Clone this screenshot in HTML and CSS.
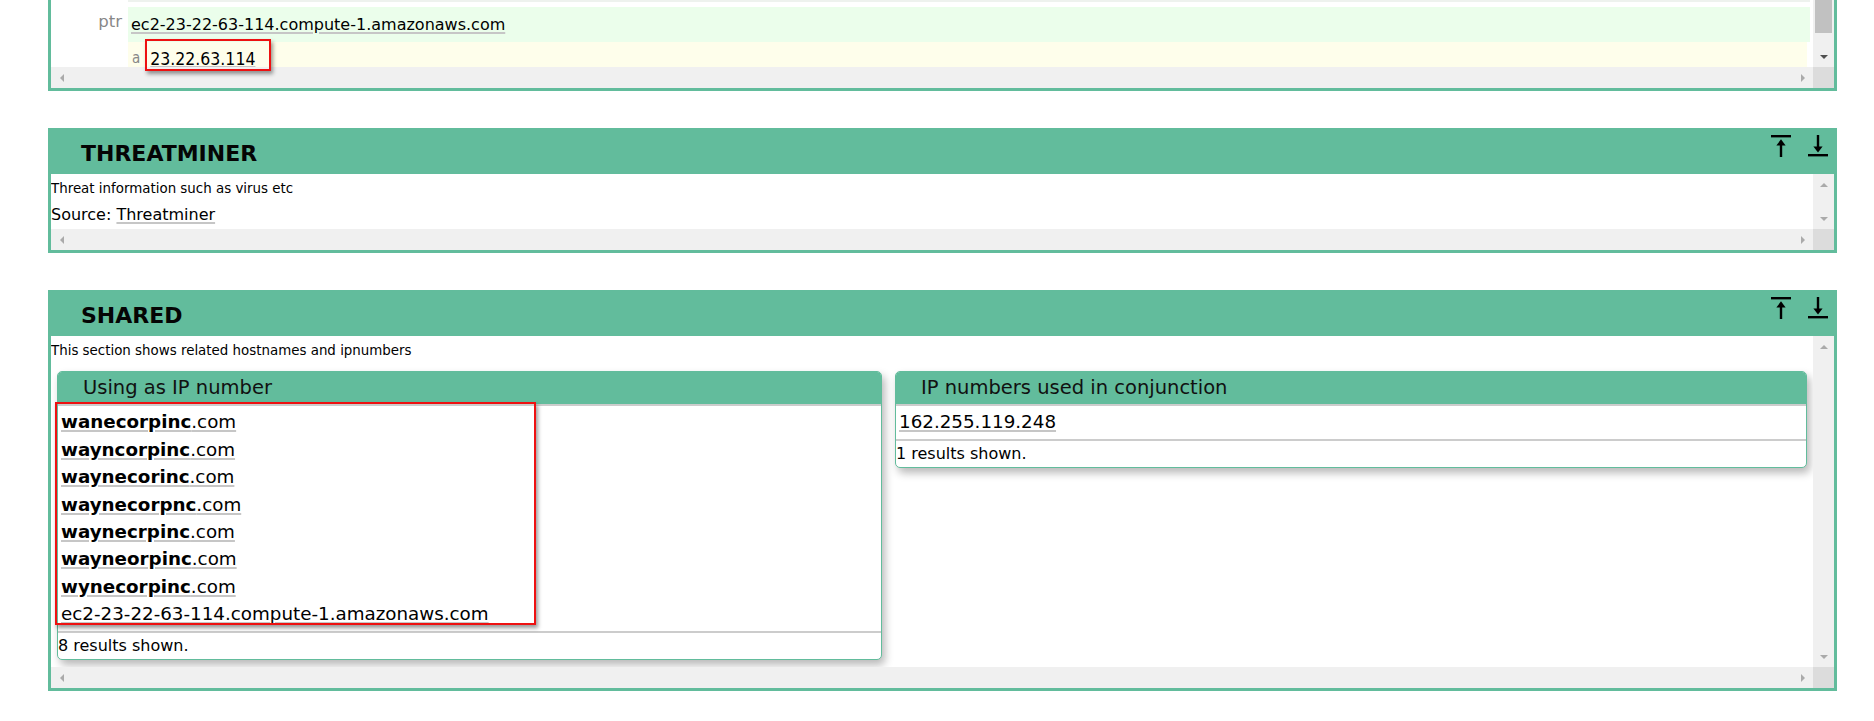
FILE: index.html
```html
<!DOCTYPE html>
<html>
<head>
<meta charset="utf-8">
<title>Sections</title>
<link rel="stylesheet" href="styles.css">
</head>
<body>
<div class="page">

  <section class="panel cut">
    <div class="pbody">
      <div class="pcontent dns">
        <div class="strip"></div>
        <div class="kv ptr">
          <span class="k">ptr</span>
          <span class="v"><a class="lnk">ec2-23-22-63-114.compute-1.amazonaws.com</a></span>
        </div>
        <div class="kv arec">
          <span class="k0"></span>
          <span class="v"><span class="ka">a</span><a class="lnk ip">23.22.63.114</a></span>
        </div>
      </div>
      <div class="vscroll active"><div class="thumb"></div><div class="btn"><i class="tri down dark"></i></div></div>
      <div class="hscroll"><div class="btn"><i class="tri left"></i></div><div class="btn"><i class="tri right"></i></div></div>
      <div class="corner"></div>
    </div>
  </section>

  <section class="panel">
    <header class="phead">
      <h2>THREATMINER</h2>
      <div class="tools">
        <svg class="ic" viewBox="0 0 20 22" width="20" height="22"><rect x="0" y="0" width="20" height="2.4"/><rect x="8.8" y="8" width="2.4" height="14"/><path d="M10 4.3 L14.6 10.4 H5.4 Z"/></svg>
        <svg class="ic" viewBox="0 0 20 22" width="20" height="22"><rect x="8.8" y="0" width="2.4" height="13"/><path d="M10 17.6 L14.6 11.6 H5.4 Z"/><rect x="0" y="19" width="20" height="2.4"/></svg>
      </div>
    </header>
    <div class="pbody">
      <div class="pcontent tm">
        <p class="desc">Threat information such as virus etc</p>
        <p class="source">Source: <a class="lnk">Threatminer</a></p>
      </div>
      <div class="vscroll"><div class="btn"><i class="tri up"></i></div><div class="btn"><i class="tri down"></i></div></div>
      <div class="hscroll"><div class="btn"><i class="tri left"></i></div><div class="btn"><i class="tri right"></i></div></div>
      <div class="corner"></div>
    </div>
  </section>

  <section class="panel">
    <header class="phead">
      <h2>SHARED</h2>
      <div class="tools">
        <svg class="ic" viewBox="0 0 20 22" width="20" height="22"><rect x="0" y="0" width="20" height="2.4"/><rect x="8.8" y="8" width="2.4" height="14"/><path d="M10 4.3 L14.6 10.4 H5.4 Z"/></svg>
        <svg class="ic" viewBox="0 0 20 22" width="20" height="22"><rect x="8.8" y="0" width="2.4" height="13"/><path d="M10 17.6 L14.6 11.6 H5.4 Z"/><rect x="0" y="19" width="20" height="2.4"/></svg>
      </div>
    </header>
    <div class="pbody">
      <div class="pcontent shared">
        <p class="desc">This section shows related hostnames and ipnumbers</p>
        <div class="boxes">
          <div class="box">
            <div class="box-head">Using as IP number</div>
            <div class="box-list">
              <div class="row"><a class="lnk"><b>wanecorpinc</b>.com</a></div>
              <div class="row"><a class="lnk"><b>wayncorpinc</b>.com</a></div>
              <div class="row"><a class="lnk"><b>waynecorinc</b>.com</a></div>
              <div class="row"><a class="lnk"><b>waynecorpnc</b>.com</a></div>
              <div class="row"><a class="lnk"><b>waynecrpinc</b>.com</a></div>
              <div class="row"><a class="lnk"><b>wayneorpinc</b>.com</a></div>
              <div class="row"><a class="lnk"><b>wynecorpinc</b>.com</a></div>
              <div class="row"><a class="lnk">ec2-23-22-63-114.compute-1.amazonaws.com</a></div>
            </div>
            <div class="box-foot">8 results shown.</div>
          </div>
          <div class="box">
            <div class="box-head">IP numbers used in conjunction</div>
            <div class="box-list">
              <div class="row"><a class="lnk">162.255.119.248</a></div>
            </div>
            <div class="box-foot">1 results shown.</div>
          </div>
        </div>
      </div>
      <div class="vscroll"><div class="btn"><i class="tri up"></i></div><div class="btn"><i class="tri down"></i></div></div>
      <div class="hscroll"><div class="btn"><i class="tri left"></i></div><div class="btn"><i class="tri right"></i></div></div>
      <div class="corner"></div>
    </div>
  </section>

  <div class="annot annot-a"></div>
  <div class="annot annot-list"></div>
</div>
</body>
</html>
```

FILE: styles.css
```css
* { box-sizing: border-box; }

html, body {
  margin: 0;
  padding: 0;
  overflow: hidden;
  background: #ffffff;
}

body {
  font-family: "DejaVu Sans", Verdana, sans-serif;
  color: #000;
}

.page {
  position: relative;
  width: 1837px;
  padding-left: 48px;
}

.panel {
  border: 3px solid #62bc9c;
  background: #fff;
  margin-bottom: 37px;
}

.panel:last-of-type { margin-bottom: 0; }

.panel.cut { border-top: 0; }

/* ---------- header ---------- */
.phead {
  height: 43px;
  background: #62bc9c;
  display: flex;
  justify-content: space-between;
  align-items: flex-start;
  padding: 0 6px 0 30px;
}

.phead h2 {
  margin: 10px 0 0;
  font-size: 22px;
  line-height: 26px;
  font-weight: bold;
  color: #050505;
}

.tools {
  display: flex;
  gap: 17px;
  margin-top: 4px;
}

.ic { display: block; fill: #000; }

/* ---------- body with fake scrollbars ---------- */
.pbody {
  display: grid;
  grid-template-columns: 1fr 21px;
  grid-template-rows: auto 21px;
}

.pcontent { overflow: hidden; }

.vscroll {
  background: #f0f0f0;
  display: flex;
  flex-direction: column;
  justify-content: space-between;
  align-items: center;
}

.hscroll {
  background: #f0f0f0;
  display: flex;
  justify-content: space-between;
}

.corner { background: #dcdcdc; }

.btn {
  width: 21px;
  height: 21px;
  display: flex;
  align-items: center;
  justify-content: center;
}

.thumb {
  width: 17px;
  height: 33px;
  background: #c1c1c1;
}

.tri { display: block; width: 0; height: 0; }
.tri.up { border-left: 4px solid transparent; border-right: 4px solid transparent; border-bottom: 4px solid #aaaaaa; }
.tri.down { border-left: 4px solid transparent; border-right: 4px solid transparent; border-top: 4px solid #aaaaaa; }
.tri.left { border-top: 4px solid transparent; border-bottom: 4px solid transparent; border-right: 4px solid #aaaaaa; }
.tri.right { border-top: 4px solid transparent; border-bottom: 4px solid transparent; border-left: 4px solid #aaaaaa; }
.tri.down.dark { border-top-color: #505050; }

/* ---------- links ---------- */
.lnk {
  color: #000;
  text-decoration: underline;
  text-decoration-color: #c6c6c6;
  text-decoration-thickness: 2px;
  text-underline-offset: 2px;
}

/* ---------- DNS (top, cut) panel ---------- */
.pcontent.dns { height: 67px; overflow: visible; }

.strip {
  height: 2px;
  margin: 0 3px 5px 77px;
  background: #eef2ee;
}

.kv { display: flex; align-items: stretch; }

.kv.ptr { height: 35px; }
.kv.arec { height: 25px; }

.k {
  width: 77px;
  flex: none;
  text-align: right;
  padding: 4.5px 6px 0 0;
  font-size: 16.5px;
  color: #888;
}

.k0 { width: 77px; flex: none; }

.v {
  flex: 1;
  display: flex;
  align-items: flex-start;
}

.ptr .v {
  background: #ebfeeb;
  margin-right: 3px;
  padding: 7.5px 0 0 3px;
  font-size: 16px;
}

.arec .v {
  background: #fefeeb;
  margin-right: 6px;
  padding: 8px 0 0 4px;
}

.ka {
  font-family: "DejaVu Sans Condensed", "DejaVu Sans", sans-serif;
  font-stretch: condensed;
  font-size: 15px;
  line-height: 15px;
  padding-top: 1px;
  color: #888;
  margin-right: 10px;
}

.ip {
  font-family: "DejaVu Sans Condensed", "DejaVu Sans", sans-serif;
  font-stretch: condensed;
  font-size: 17.5px;
  line-height: 14px;
  margin-top: 2px;
  text-underline-offset: 1px;
}

/* ---------- threatminer ---------- */
.tm { height: 55px; }

.desc {
  margin: 0;
  padding-top: 7px;
  font-size: 13.4px;
  line-height: 16px;
}

.source {
  margin: 4px 0 0;
  font-size: 16px;
  line-height: 28px;
}

/* ---------- shared ---------- */
.shared { height: 331px; }

.boxes {
  display: grid;
  grid-template-columns: 825px 1fr;
  column-gap: 13px;
  align-items: start;
  padding: 0 6px;
  margin-top: 12px;
}

.box {
  border: 1px solid #62bc9c;
  border-radius: 5px;
  background: #fff;
  box-shadow: 3px 5px 8px rgba(0, 0, 0, 0.28);
  overflow: hidden;
}

.box-head {
  height: 34px;
  background: #62bc9c;
  border-bottom: 2px solid #cccccc;
  padding-left: 25px;
  font-size: 19.5px;
  line-height: 32px;
  color: #111;
}

.box-list {
  padding: 2.4px 0 3.4px 3px;
  font-size: 18.3px;
  line-height: 27.4px;
  border-bottom: 2px solid #cccccc;
}

.box-foot {
  font-size: 16px;
  line-height: 26px;
  color: #000;
}

/* ---------- screenshot annotations ---------- */
.annot {
  position: absolute;
  border: 2px solid #ee1111;
  box-shadow: 2px 3px 4px rgba(0, 0, 0, 0.4);
}

.annot-a {
  left: 145px;
  top: 39px;
  width: 126px;
  height: 32px;
}

.annot-list {
  left: 55px;
  top: 402px;
  width: 481px;
  height: 223px;
}
```
